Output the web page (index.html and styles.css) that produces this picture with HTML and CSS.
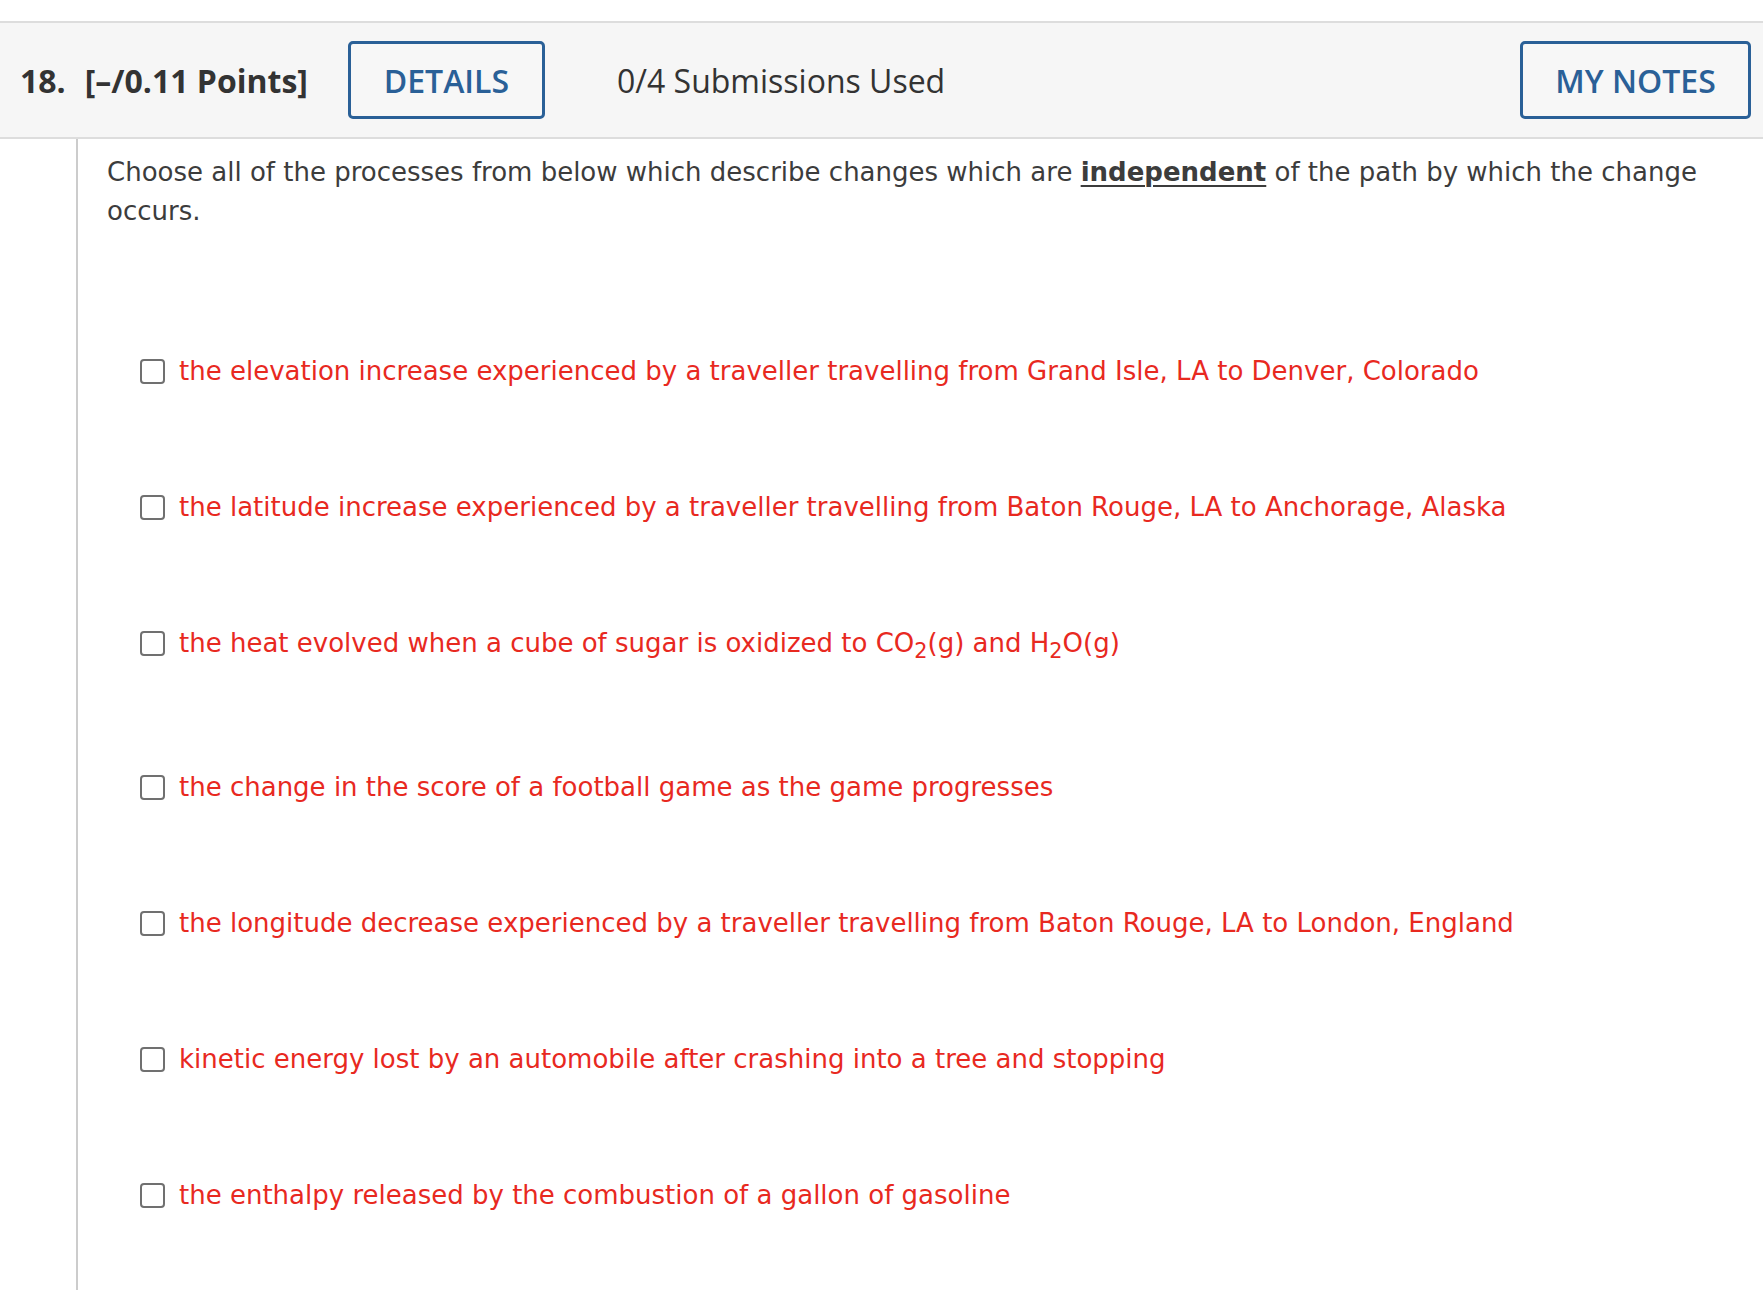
FILE: index.html
```html
<!DOCTYPE html>
<html lang="en">
<head>
<meta charset="utf-8">
<title>Question 18</title>
<link rel="stylesheet" href="styles.css">
</head>
<body>
<div class="page">
  <div class="q-header">
    <div class="q-title"><span class="q-num">18.</span><span class="q-points">[–/0.11 Points]</span></div>
    <button class="btn btn-details">DETAILS</button>
    <div class="q-subs">0/4 Submissions Used</div>
    <button class="btn btn-notes">MY NOTES</button>
  </div>
  <div class="q-body">
    <p class="prompt">Choose all of the processes from below which describe changes which are <strong class="em">independent</strong> of the path by which the change occurs.</p>
    <ul class="options">
      <li class="option"><span class="box"></span><span class="label">the elevation increase experienced by a traveller travelling from Grand Isle, LA to Denver, Colorado</span></li>
      <li class="option"><span class="box"></span><span class="label">the latitude increase experienced by a traveller travelling from Baton Rouge, LA to Anchorage, Alaska</span></li>
      <li class="option"><span class="box"></span><span class="label">the heat evolved when a cube of sugar is oxidized to CO<sub>2</sub>(g) and H<sub>2</sub>O(g)</span></li>
      <li class="option"><span class="box"></span><span class="label">the change in the score of a football game as the game progresses</span></li>
      <li class="option"><span class="box"></span><span class="label">the longitude decrease experienced by a traveller travelling from Baton Rouge, LA to London, England</span></li>
      <li class="option"><span class="box"></span><span class="label">kinetic energy lost by an automobile after crashing into a tree and stopping</span></li>
      <li class="option"><span class="box"></span><span class="label">the enthalpy released by the combustion of a gallon of gasoline</span></li>
    </ul>
  </div>
</div>
</body>
</html>
```

FILE: styles.css
```css
html, body {
  margin: 0;
  padding: 0;
  background: #ffffff;
}

.page {
  padding-top: 21px;
  min-height: 1269px;
  display: flex;
  flex-direction: column;
}

.q-header {
  display: flex;
  align-items: center;
  height: 114px;
  background: #f6f6f6;
  border-top: 2px solid #dddddd;
  border-bottom: 2px solid #dddddd;
  padding: 0 12px 0 20px;
  font-family: "Open Sans", "Liberation Sans", sans-serif;
  color: #333333;
}

.q-title {
  font-size: 32px;
  font-weight: 700;
  display: flex;
  gap: 19px;
  color: #333333;
}

.btn {
  font-family: "Open Sans", "Liberation Sans", sans-serif;
  font-size: 32px;
  font-weight: 600;
  color: #2a6097;
  background: #f7f7f7;
  border: 3px solid #2a6097;
  border-radius: 5px;
  height: 78px;
  padding: 0;
  cursor: pointer;
}

.btn-details {
  width: 197px;
  margin-left: 40px;
}

.q-subs {
  margin-left: 72px;
  font-size: 32px;
  font-weight: 400;
  color: #333333;
  flex: 1;
}

.btn-notes {
  width: 231px;
}

.q-body {
  flex: 1;
  margin-left: 76px;
  border-left: 2px solid #cccccc;
  padding: 14px 30px 0 29px;
  font-family: "DejaVu Sans", Verdana, sans-serif;
}

.prompt {
  margin: 0;
  font-size: 26px;
  line-height: 39px;
  color: #3c3c3c;
}

.em {
  font-weight: 700;
  text-decoration: underline;
  text-decoration-thickness: 2px;
  text-underline-offset: 4px;
}

.options {
  list-style: none;
  margin: 121px 0 0 0;
  padding: 0 0 0 33px;
  display: flex;
  flex-direction: column;
  gap: 97px;
}

.option {
  display: flex;
  align-items: flex-start;
  gap: 14px;
  font-size: 26px;
  line-height: 39px;
  color: #e8291f;
}

.box {
  flex: none;
  width: 21px;
  height: 21px;
  border: 2px solid #707070;
  border-radius: 4px;
  background: #ffffff;
  margin-top: 7px;
}

.label sub {
  font-size: 0.8em;
  vertical-align: -0.3em;
}
```
